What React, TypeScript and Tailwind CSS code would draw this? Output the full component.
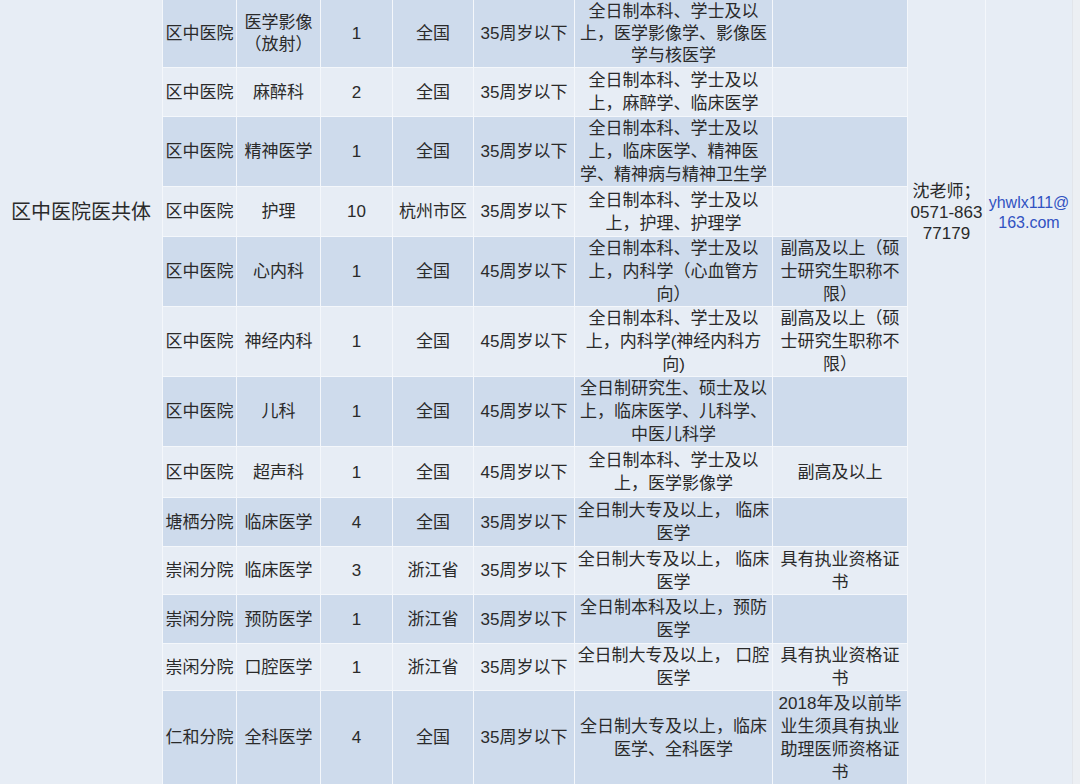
import React from "react";

type Row = {
  h: number;
  c2: string;
  c3: string[];
  c4: string;
  c5: string;
  c6: string;
  c7: string[];
  c8: string[];
};

const rows: Row[] = [
  { h: 69, c2: "区中医院", c3: ["医学影像", "（放射）"], c4: "1", c5: "全国", c6: "35周岁以下", c7: ["全日制本科、学士及以", "上，医学影像学、影像医", "学与核医学"], c8: [] },
  { h: 49, c2: "区中医院", c3: ["麻醉科"], c4: "2", c5: "全国", c6: "35周岁以下", c7: ["全日制本科、学士及以", "上，麻醉学、临床医学"], c8: [] },
  { h: 70, c2: "区中医院", c3: ["精神医学"], c4: "1", c5: "全国", c6: "35周岁以下", c7: ["全日制本科、学士及以", "上，临床医学、精神医", "学、精神病与精神卫生学"], c8: [] },
  { h: 50, c2: "区中医院", c3: ["护理"], c4: "10", c5: "杭州市区", c6: "35周岁以下", c7: ["全日制本科、学士及以", "上，护理、护理学"], c8: [] },
  { h: 68, c2: "区中医院", c3: ["心内科"], c4: "1", c5: "全国", c6: "45周岁以下", c7: ["全日制本科、学士及以", "上，内科学（心血管方", "向）"], c8: ["副高及以上（硕", "士研究生职称不", "限）"] },
  { h: 69, c2: "区中医院", c3: ["神经内科"], c4: "1", c5: "全国", c6: "45周岁以下", c7: ["全日制本科、学士及以", "上，内科学(神经内科方", "向)"], c8: ["副高及以上（硕", "士研究生职称不", "限）"] },
  { h: 70, c2: "区中医院", c3: ["儿科"], c4: "1", c5: "全国", c6: "45周岁以下", c7: ["全日制研究生、硕士及以", "上，临床医学、儿科学、", "中医儿科学"], c8: [] },
  { h: 51, c2: "区中医院", c3: ["超声科"], c4: "1", c5: "全国", c6: "45周岁以下", c7: ["全日制本科、学士及以", "上，医学影像学"], c8: ["副高及以上"] },
  { h: 49, c2: "塘栖分院", c3: ["临床医学"], c4: "4", c5: "全国", c6: "35周岁以下", c7: ["全日制大专及以上， 临床", "医学"], c8: [] },
  { h: 48, c2: "崇闲分院", c3: ["临床医学"], c4: "3", c5: "浙江省", c6: "35周岁以下", c7: ["全日制大专及以上， 临床", "医学"], c8: ["具有执业资格证", "书"] },
  { h: 49, c2: "崇闲分院", c3: ["预防医学"], c4: "1", c5: "浙江省", c6: "35周岁以下", c7: ["全日制本科及以上，预防", "医学"], c8: [] },
  { h: 47, c2: "崇闲分院", c3: ["口腔医学"], c4: "1", c5: "浙江省", c6: "35周岁以下", c7: ["全日制大专及以上， 口腔", "医学"], c8: ["具有执业资格证", "书"] },
  { h: 94, c2: "仁和分院", c3: ["全科医学"], c4: "4", c5: "全国", c6: "35周岁以下", c7: ["全日制大专及以上，临床", "医学、全科医学"], c8: ["2018年及以前毕", "业生须具有执业", "助理医师资格证", "书"] },
  { h: 50, c2: "", c3: [], c4: "", c5: "", c6: "", c7: [], c8: [] },
];

const cell = "border-r border-b border-[#f4f7fb] px-0 text-center align-middle whitespace-nowrap";

function Lines({ lines }: { lines: string[] }) {
  return (
    <>
      {lines.map((l, i) => (
        <div key={i}>{l}</div>
      ))}
    </>
  );
}

export default function App() {
  return (
    <div
      className="w-[1080px] h-[784px] overflow-hidden bg-[#eceff3] text-[#2a2a2a]"
      style={{ fontFamily: '"Liberation Sans", "Noto Sans CJK SC", sans-serif' }}
    >
      <table className="-mt-[2px] w-[1073px] table-fixed border-separate border-spacing-0 text-[17px] leading-[23px]">
        <colgroup>
          <col className="w-[163px]" />
          <col className="w-[74px]" />
          <col className="w-[84px]" />
          <col className="w-[72px]" />
          <col className="w-[81px]" />
          <col className="w-[101px]" />
          <col className="w-[198px]" />
          <col className="w-[135px]" />
          <col className="w-[78px]" />
          <col className="w-[87px]" />
        </colgroup>
        <tbody>
          {rows.map((r, i) => {
            const bg = i % 2 === 0 ? "bg-[#cedbec]" : "bg-[#e7edf5]";
            const pad = i === 0 ? "pt-[3px] pb-0 leading-[22px]" : "py-0";
            return (
              <tr key={i} style={{ height: r.h }}>
                {i === 0 && (
                  <td
                    rowSpan={rows.length}
                    className="border-r border-b border-[#f4f7fb] bg-[#e7edf5] text-center align-top whitespace-nowrap pt-[203px] text-[20px] leading-[23px]"
                  >
                    区中医院医共体
                  </td>
                )}
                <td className={`${cell} ${pad} ${bg}`}>{r.c2}</td>
                <td className={`${cell} ${pad} ${bg}`}>
                  <Lines lines={r.c3} />
                </td>
                <td className={`${cell} ${pad} ${bg}`}>{r.c4}</td>
                <td className={`${cell} ${pad} ${bg}`}>{r.c5}</td>
                <td className={`${cell} ${pad} ${bg}`}>{r.c6}</td>
                <td className={`${cell} ${pad} ${bg}`}>
                  <Lines lines={r.c7} />
                </td>
                <td className={`${cell} ${pad} ${bg}`}>
                  <Lines lines={r.c8} />
                </td>
                {i === 0 && (
                  <td
                    rowSpan={rows.length}
                    className="border-r border-b border-[#f4f7fb] bg-[#e7edf5] text-center align-top whitespace-nowrap pt-[183px] leading-[21px]"
                  >
                    <div>沈老师；</div>
                    <div>0571-863</div>
                    <div>77179</div>
                  </td>
                )}
                {i === 0 && (
                  <td
                    rowSpan={rows.length}
                    className="border-r border-b border-[#e2e5ea] bg-[#e7edf5] text-center align-top whitespace-nowrap pt-[195px] text-[16px] leading-[20px] text-[#3152c2]"
                  >
                    <div>yhwlx111@</div>
                    <div>163.com</div>
                  </td>
                )}
              </tr>
            );
          })}
        </tbody>
      </table>
    </div>
  );
}
